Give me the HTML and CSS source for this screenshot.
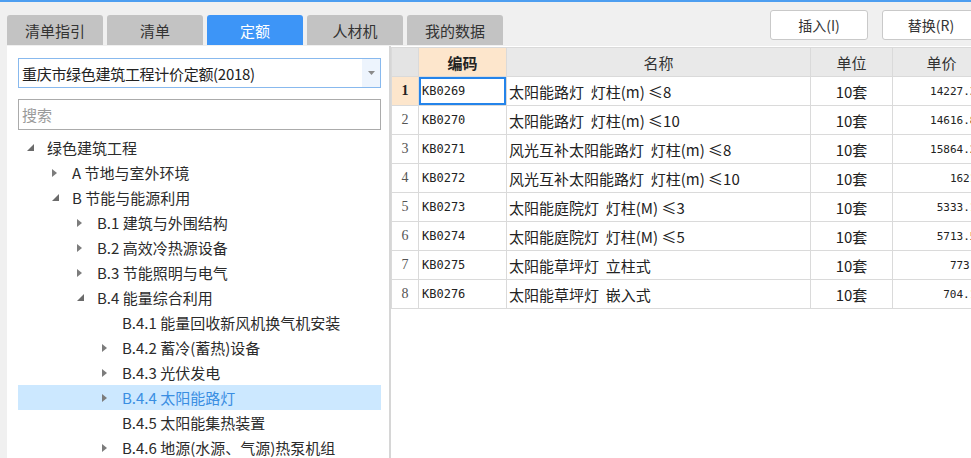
FILE: index.html
```html
<!DOCTYPE html>
<html lang="zh-CN">
<head>
<meta charset="utf-8">
<title>定额</title>
<link rel="stylesheet" href="styles.css">
</head>
<body>
<div class="topbar">
  <div class="tabs">
    <div class="tab">清单指引</div>
    <div class="tab">清单</div>
    <div class="tab active">定额</div>
    <div class="tab">人材机</div>
    <div class="tab">我的数据</div>
  </div>
  <div class="actions">
    <button class="btn">插入(I)</button>
    <button class="btn">替换(R)</button>
  </div>
</div>
<div class="main">
  <aside class="left">
    <div class="select">
      <span class="select-text">重庆市绿色建筑工程计价定额(2018)</span>
      <span class="select-arrow"><svg width="7" height="4" viewBox="0 0 7 4"><path d="M0 0H7L3.5 4Z" fill="#8a8a8a"/></svg></span>
    </div>
    <div class="search"><span class="placeholder">搜索</span></div>
    <ul class="tree">
      <li class="node l0"><span class="tog"><svg width="7" height="7" viewBox="0 0 7 7"><path d="M7 0V7H0Z" fill="#6b6b6b"/></svg></span><span class="label">绿色建筑工程</span></li>
      <li class="node l1"><span class="tog"><svg width="5" height="8" viewBox="0 0 5 8"><path d="M0 0L5 4L0 8Z" fill="#7c7c7c"/></svg></span><span class="label">A 节地与室外环境</span></li>
      <li class="node l1"><span class="tog"><svg width="7" height="7" viewBox="0 0 7 7"><path d="M7 0V7H0Z" fill="#6b6b6b"/></svg></span><span class="label">B 节能与能源利用</span></li>
      <li class="node l2"><span class="tog"><svg width="5" height="8" viewBox="0 0 5 8"><path d="M0 0L5 4L0 8Z" fill="#7c7c7c"/></svg></span><span class="label">B.1 建筑与外围结构</span></li>
      <li class="node l2"><span class="tog"><svg width="5" height="8" viewBox="0 0 5 8"><path d="M0 0L5 4L0 8Z" fill="#7c7c7c"/></svg></span><span class="label">B.2 高效冷热源设备</span></li>
      <li class="node l2"><span class="tog"><svg width="5" height="8" viewBox="0 0 5 8"><path d="M0 0L5 4L0 8Z" fill="#7c7c7c"/></svg></span><span class="label">B.3 节能照明与电气</span></li>
      <li class="node l2"><span class="tog"><svg width="7" height="7" viewBox="0 0 7 7"><path d="M7 0V7H0Z" fill="#6b6b6b"/></svg></span><span class="label">B.4 能量综合利用</span></li>
      <li class="node l3"><span class="tog"></span><span class="label">B.4.1 能量回收新风机换气机安装</span></li>
      <li class="node l3"><span class="tog"><svg width="5" height="8" viewBox="0 0 5 8"><path d="M0 0L5 4L0 8Z" fill="#7c7c7c"/></svg></span><span class="label">B.4.2 蓄冷(蓄热)设备</span></li>
      <li class="node l3"><span class="tog"><svg width="5" height="8" viewBox="0 0 5 8"><path d="M0 0L5 4L0 8Z" fill="#7c7c7c"/></svg></span><span class="label">B.4.3 光伏发电</span></li>
      <li class="node l3 sel"><span class="tog"><svg width="5" height="8" viewBox="0 0 5 8"><path d="M0 0L5 4L0 8Z" fill="#7c7c7c"/></svg></span><span class="label">B.4.4 太阳能路灯</span></li>
      <li class="node l3"><span class="tog"></span><span class="label">B.4.5 太阳能集热装置</span></li>
      <li class="node l3"><span class="tog"><svg width="5" height="8" viewBox="0 0 5 8"><path d="M0 0L5 4L0 8Z" fill="#7c7c7c"/></svg></span><span class="label">B.4.6 地源(水源、气源)热泵机组</span></li>
    </ul>
  </aside>
  <section class="right">
    <table class="grid">
      <colgroup>
        <col class="c-no"><col class="c-code"><col class="c-name"><col class="c-unit"><col class="c-price">
      </colgroup>
      <thead>
        <tr>
          <th class="corner"></th>
          <th class="hsel">编码</th>
          <th>名称</th>
          <th>单位</th>
          <th>单价</th>
        </tr>
      </thead>
      <tbody>
        <tr><td class="no nosel">1</td><td class="code cur">KB0269</td><td class="name">太阳能路灯  灯柱(m) ≤8</td><td class="unit">10套</td><td class="price">14227.35</td></tr>
        <tr><td class="no">2</td><td class="code">KB0270</td><td class="name">太阳能路灯  灯柱(m) ≤10</td><td class="unit">10套</td><td class="price">14616.82</td></tr>
        <tr><td class="no">3</td><td class="code">KB0271</td><td class="name">风光互补太阳能路灯  灯柱(m) ≤8</td><td class="unit">10套</td><td class="price">15864.27</td></tr>
        <tr><td class="no">4</td><td class="code">KB0272</td><td class="name">风光互补太阳能路灯  灯柱(m) ≤10</td><td class="unit">10套</td><td class="price">16210</td></tr>
        <tr><td class="no">5</td><td class="code">KB0273</td><td class="name">太阳能庭院灯  灯柱(M) ≤3</td><td class="unit">10套</td><td class="price">5333.16</td></tr>
        <tr><td class="no">6</td><td class="code">KB0274</td><td class="name">太阳能庭院灯  灯柱(M) ≤5</td><td class="unit">10套</td><td class="price">5713.58</td></tr>
        <tr><td class="no">7</td><td class="code">KB0275</td><td class="name">太阳能草坪灯  立柱式</td><td class="unit">10套</td><td class="price">773.4</td></tr>
        <tr><td class="no">8</td><td class="code">KB0276</td><td class="name">太阳能草坪灯  嵌入式</td><td class="unit">10套</td><td class="price">704.12</td></tr>
      </tbody>
    </table>
  </section>
</div>
</body>
</html>
```
FILE: styles.css
```css
html, body {
  margin: 0;
  padding: 0;
}
body {
  width: 971px;
  height: 458px;
  box-sizing: border-box;
  overflow: hidden;
  background: #f0f0f0;
  border-top: 2px solid #4d9ef0;
  font-family: "Noto Sans CJK SC", "Noto Sans", sans-serif;
  color: #333;
}

/* top bar */
.topbar {
  display: flex;
  height: 44px;
}
.tabs {
  display: flex;
  align-items: flex-end;
  gap: 4px;
  padding-left: 7px;
  padding-bottom: 1px;
}
.tab {
  width: 96px;
  height: 30px;
  background: #c3c3c3;
  border-radius: 3px 3px 0 0;
  display: flex;
  align-items: center;
  justify-content: center;
  font-size: 15px;
  color: #333;
}
.tab.active {
  background: #3d95f7;
  color: #fff;
}
.actions {
  margin-left: auto;
  margin-right: -9px;
  display: flex;
  gap: 14px;
  padding-top: 8px;
}
.btn {
  width: 98px;
  height: 30px;
  background: #fff;
  border: 1px solid #c9c9c9;
  border-radius: 3px;
  font-family: "Noto Sans CJK SC", "Noto Sans", sans-serif;
  font-size: 14px;
  color: #333;
  padding: 0;
}

/* main */
.main {
  display: flex;
  height: 412px;
}
.left {
  width: 382px;
  flex: none;
  margin-left: 7px;
  box-sizing: border-box;
  background: #fff;
  padding: 12px 8px 0 11px;
}
.select {
  height: 30px;
  box-sizing: border-box;
  border: 1px solid #88b9ee;
  display: flex;
  align-items: stretch;
}
.select-text {
  flex: 1;
  display: flex;
  align-items: center;
  padding-left: 3px;
  font-size: 15px;
  color: #222;
  letter-spacing: -0.3px;
}
.select-arrow {
  width: 18px;
  background: #edf4fd;
  display: flex;
  align-items: center;
  justify-content: center;
}
.search {
  margin-top: 11px;
  height: 31px;
  box-sizing: border-box;
  border: 1px solid #ababab;
  display: flex;
  align-items: center;
  padding-left: 3px;
}
.placeholder {
  font-size: 15px;
  color: #9a9a9a;
}
.tree {
  list-style: none;
  margin: 5px 0 0;
  padding: 0;
}
.node {
  height: 25px;
  display: flex;
  align-items: center;
  font-size: 15px;
  color: #2b2b2b;
  white-space: nowrap;
}
.l0 { padding-left: 9px; }
.l1 { padding-left: 34px; }
.l2 { padding-left: 59px; }
.l3 { padding-left: 84px; }
.tog {
  width: 20px;
  flex: none;
  display: flex;
  align-items: center;
}
.node.sel {
  background: #cce8ff;
  color: #3a8ee2;
}

/* right grid */
.right {
  flex: 1;
  min-width: 0;
  overflow: hidden;
  background: #fff;
  border-left: 2px solid #d6d6d6;
  padding-top: 1px;
}
.grid {
  border-collapse: collapse;
  table-layout: fixed;
  width: 599px;
}
.c-no { width: 27px; }
.c-code { width: 88px; }
.c-name { width: 304px; }
.c-unit { width: 82px; }
.c-price { width: 98px; }
.grid th,
.grid td {
  border: 1px solid #dadada;
  height: 28px;
  padding: 0;
  white-space: pre;
  overflow: hidden;
}
.grid th {
  background: #e9e9e9;
  font-weight: normal;
  font-size: 15px;
  color: #333;
  text-align: center;
}
.grid th.hsel {
  background: #fde6cc;
  font-weight: bold;
  color: #222;
}
.grid th.corner {
  background: #e4e4e4;
}
.no {
  text-align: center;
  font-family: "Liberation Serif", serif;
  font-size: 14px;
  color: #555;
}
.no.nosel {
  background: #fde6cc;
  font-weight: bold;
  color: #222;
}
.code {
  font-family: "DejaVu Sans Mono", monospace;
  font-size: 12px;
  color: #222;
  padding-left: 3px !important;
}
.code.cur {
  box-shadow: inset 0 0 0 2px #2484ea;
}
.name {
  font-size: 15px;
  color: #222;
  padding-left: 2px !important;
}
.unit {
  text-align: center;
  font-size: 15px;
  color: #222;
}
.price {
  text-align: right;
  font-family: "DejaVu Sans Mono", monospace;
  font-size: 11px;
  color: #222;
  padding-right: 7px !important;
}
```
